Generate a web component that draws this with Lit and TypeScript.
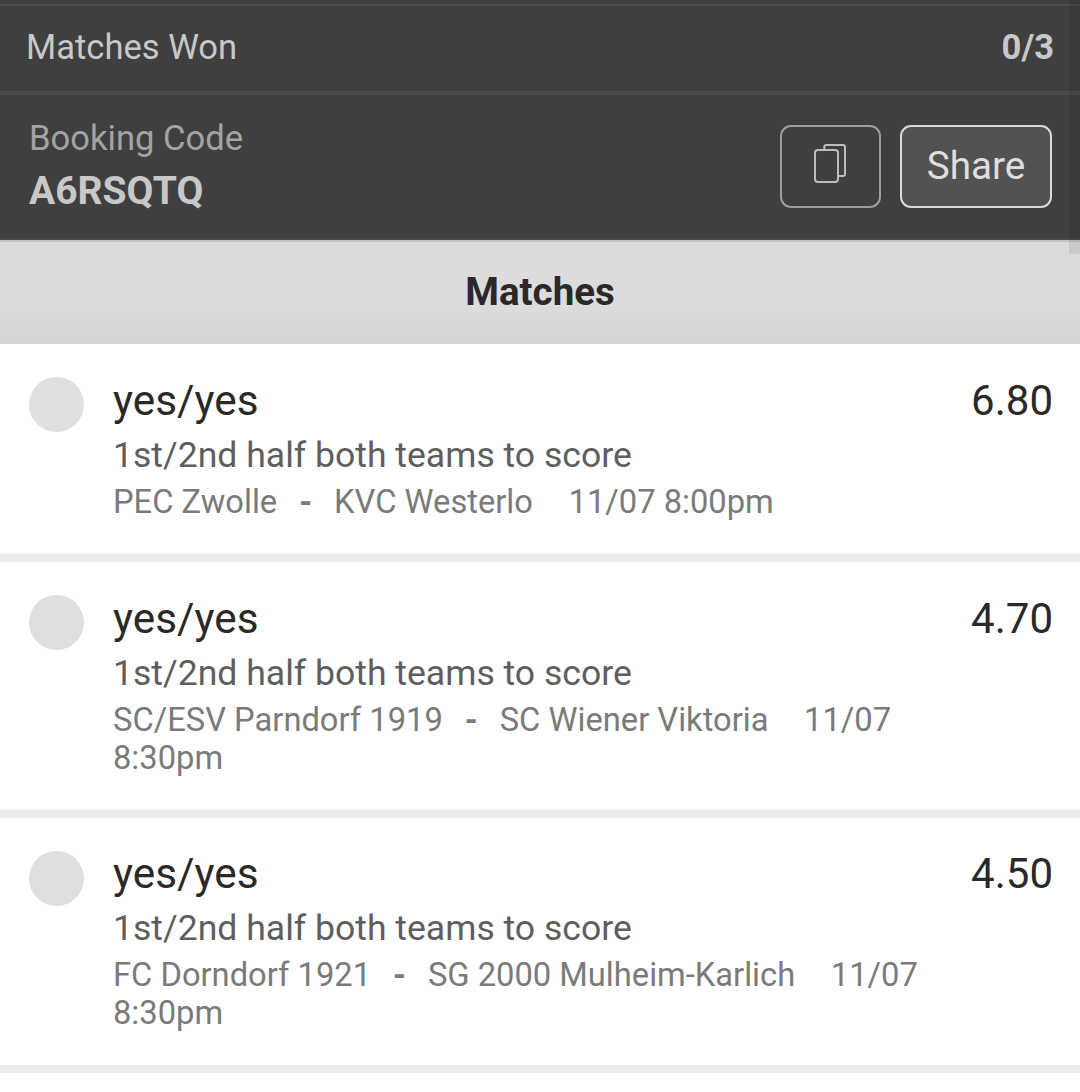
import { LitElement, html, css } from "lit";
import { customElement } from "lit/decorators.js";

const matches = [
  { odds: "6.80", home: "PEC Zwolle", away: "KVC Westerlo", date: "11/07", clock: "8:00pm" },
  { odds: "4.70", home: "SC/ESV Parndorf 1919", away: "SC Wiener Viktoria", date: "11/07", clock: "8:30pm" },
  { odds: "4.50", home: "FC Dorndorf 1921", away: "SG 2000 Mulheim-Karlich", date: "11/07", clock: "8:30pm" },
];

@customElement("app-root")
export class AppRoot extends LitElement {
  static styles = css`
    :host {
      display: block;
      height: 1092px;
      overflow: hidden;
      background: #fff;
      font-family: Roboto, "Liberation Sans", sans-serif;
      position: relative;
    }

    .dark {
      background: #3f3f3f;
      padding-top: 4px;
    }

    .won {
      display: flex;
      justify-content: space-between;
      align-items: center;
      height: 81px;
      padding: 0 26px 4px 26px;
      border-top: 2px solid #4b4b4b;
      border-bottom: 4px solid #4b4b4b;
      font-size: 34.6px;
      color: #c8c8c8;
    }

    .won b {
      font-weight: 700;
      font-size: 34.5px;
    }

    .booking {
      display: flex;
      justify-content: space-between;
      align-items: center;
      height: 143px;
      padding: 0 28px 0 29px;
      border-bottom: 2px solid #4a4a4a;
    }

    .code-label {
      font-size: 34.6px;
      color: #a3a3a3;
      line-height: 40px;
      margin-top: -3px;
    }

    .code {
      font-size: 39px;
      font-weight: 700;
      color: #c8c8c8;
      line-height: 44px;
      margin-top: 11px;
    }

    .actions {
      display: flex;
      gap: 19px;
    }

    .btn {
      box-sizing: border-box;
      height: 83px;
      border-radius: 11px;
      display: flex;
      align-items: center;
      justify-content: center;
    }

    .copy {
      width: 101px;
      border: 2px solid #9e9e9e;
    }

    .copy svg {
      margin: 0 2px 6px 0;
    }

    .share {
      width: 152px;
      border: 2px solid #d9d9d9;
      background: #525252;
      color: #dedede;
      font-size: 38.7px;
      padding-bottom: 3px;
    }

    .title {
      box-sizing: border-box;
      height: 104px;
      padding-bottom: 4px;
      background: linear-gradient(#dcdcdc 60%, #d6d6d6);
      border-top: 2px solid #c4c4c4;
      display: flex;
      align-items: center;
      justify-content: center;
      font-size: 38.5px;
      font-weight: 700;
      color: #2b2826;
    }

    .card {
      display: flex;
      align-items: flex-start;
      padding: 33px 27px 34px 29px;
      border-bottom: 8px solid #ececec;
    }

    .dot {
      flex: none;
      width: 55px;
      height: 55px;
      border-radius: 50%;
      background: #dfdfdf;
      margin-right: 29px;
    }

    .body {
      flex: 1;
      min-width: 0;
    }

    .pick {
      font-size: 42.3px;
      line-height: 48px;
      color: #2b2826;
    }

    .market {
      font-size: 35.6px;
      line-height: 40px;
      color: #5e5e5e;
      margin-top: 10px;
    }

    .meta {
      font-size: 32.7px;
      line-height: 38px;
      color: #7a7a7a;
      margin: 8px 0 -1px;
    }

    .sep {
      margin: 0 22px;
      font-weight: 700;
    }

    .date {
      margin-left: 27.500px;
    }

    .odds {
      flex: none;
      font-size: 42px;
      line-height: 48px;
      color: #2b2826;
    }

    /* third row sits a pixel higher in the reference */
    .card:nth-of-type(5) {
      padding-top: 32px;
    }

    .card:nth-of-type(5) .dot {
      margin-top: 1px;
    }

    .scrollbar {
      position: absolute;
      top: 0;
      right: 0;
      width: 11px;
      height: 254px;
      background: rgba(0, 0, 0, 0.08);
    }
  `;

  render() {
    return html`
      <div class="dark">
        <div class="won"><span>Matches Won</span><b>0/3</b></div>
        <div class="booking">
          <div>
            <div class="code-label">Booking Code</div>
            <div class="code">A6RSQTQ</div>
          </div>
          <div class="actions">
            <div class="btn copy">
              <svg width="32" height="39" viewBox="0 0 32 39" fill="none" stroke="#bdbdbd" stroke-width="2">
                <rect x="1" y="6" width="23" height="32" rx="3" />
                <path d="M10.300 5V3Q10.300 1 12.300 1H29Q31 1 31 3V30Q31 32 29 32H25" />
              </svg>
            </div>
            <div class="btn share">Share</div>
          </div>
        </div>
      </div>
      <div class="title">Matches</div>
      ${matches.map(
        (m) => html`
          <div class="card">
            <div class="dot"></div>
            <div class="body">
              <div class="pick">yes/yes</div>
              <div class="market">1st/2nd half both teams to score</div>
              <div class="meta">
                <span>${m.home}</span><span class="sep">-</span><span>${m.away}</span>
                <span class="date">${m.date}</span> <span>${m.clock}</span>
              </div>
            </div>
            <div class="odds">${m.odds}</div>
          </div>
        `
      )}
      <div class="scrollbar"></div>
    `;
  }
}
